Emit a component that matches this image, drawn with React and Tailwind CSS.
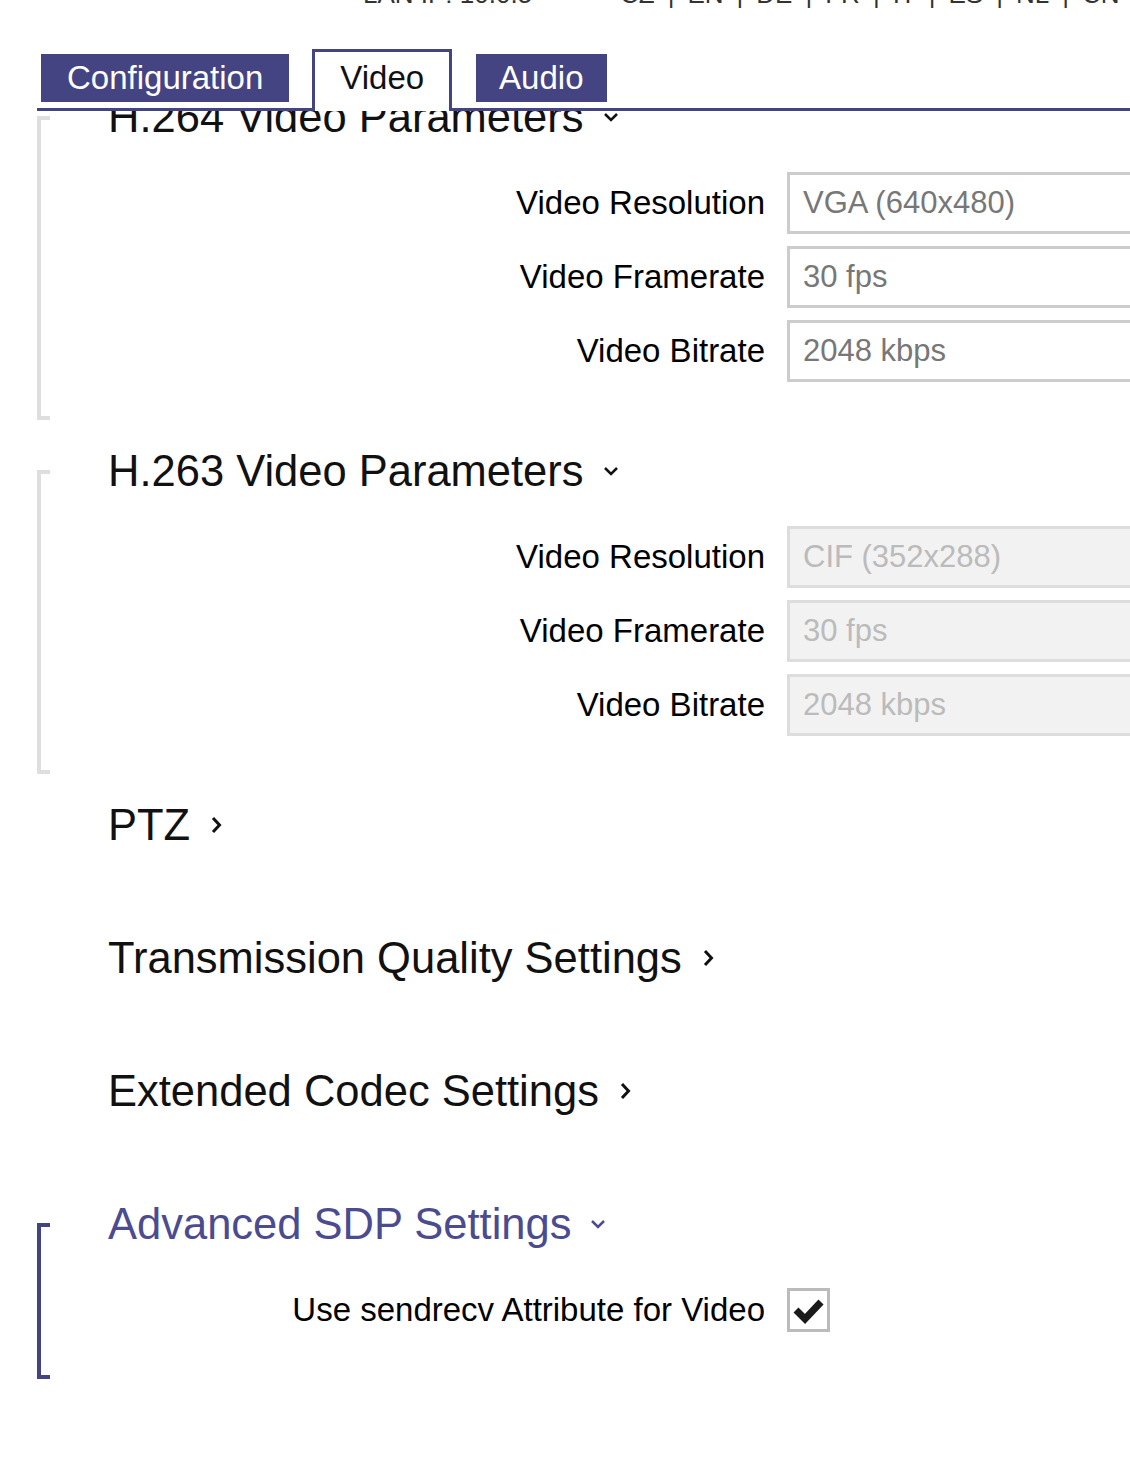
import React from 'react';

function ChevronRight({ color = '#111' }) {
  return (
    <svg width="11" height="18" viewBox="0 0 11 18" className="ml-[21px] shrink-0">
      <path d="M2 2 L8.5 9 L2 16" fill="none" stroke={color} strokeWidth="3" />
    </svg>
  );
}

function ChevronDown({ color = '#111' }) {
  return (
    <svg width="16" height="10" viewBox="0 0 16 10" className="ml-[19px] shrink-0">
      <path d="M2 2 L8 8 L14 2" fill="none" stroke={color} strokeWidth="2.5" />
    </svg>
  );
}

function Field({ label, value, disabled }) {
  return (
    <div className="flex items-center h-[62px]">
      <div className="w-[657px] shrink-0 text-right text-[33px] text-black whitespace-nowrap">{label}</div>
      <div
        className={`ml-[22px] w-[420px] shrink-0 h-[62px] border-[3px] px-[13px] flex items-center text-[31px] whitespace-nowrap ${
          disabled ? 'bg-[#f2f2f2] border-[#dddddd] text-[#bbbbbb]' : 'bg-white border-[#cccccc] text-[#777777]'
        }`}
      >
        {value}
      </div>
    </div>
  );
}

function Section({ title, open, accent, children }) {
  const color = accent ? '#4b4b8f' : '#111111';
  return (
    <section className="flex ml-[37px]">
      {open ? (
        <div
          className={`mt-[25px] w-[13px] shrink-0 border-l-4 border-t-4 border-b-4 ${
            accent ? 'border-[#444483]' : 'border-[#dedede]'
          }`}
        />
      ) : (
        <div className="w-[13px] shrink-0" />
      )}
      <div className={`pl-[58px] flex-1 ${open ? 'pb-[38px]' : 'h-[108px]'}`}>
        <h2
          className={`flex items-center text-[43.5px] leading-[52px] whitespace-nowrap ${
            accent ? 'text-[#4b4b8f]' : 'text-[#111111]'
          }`}
        >
          {title}
          {open ? <ChevronDown color={color} /> : <ChevronRight color={color} />}
        </h2>
        {open && <div className="mt-[29px] flex flex-col gap-[12px]">{children}</div>}
      </div>
    </section>
  );
}

export default function App() {
  const langs = ['CZ', 'EN', 'DE', 'FR', 'IT', 'ES', 'NL', 'CN'];

  return (
    <div className="w-[1130px] min-h-[1478px] bg-white overflow-hidden font-['Liberation_Sans',Arial,sans-serif]">
      {/* header line, scrolled mostly out of view */}
      <div className="h-[49px] overflow-hidden">
        <div className="-mt-[19px] flex text-[26px] leading-[26px] text-[#333333] whitespace-nowrap">
          <span className="ml-[363px] w-[257px] shrink-0">LAN IP: 10.0.5</span>
          <span>
            {langs.map((l, i) => (
              <span key={l}>
                {i > 0 && <span className="mx-[13px]">|</span>}
                {l}
              </span>
            ))}
          </span>
        </div>
      </div>

      {/* tabs */}
      <div className="ml-[37px] h-[62px] flex items-end border-b-[3px] border-[#444483]">
        <div className="ml-[4px] mb-[6px] h-[48px] px-[26px] flex items-center bg-[#444483] text-white text-[33px]">
          Configuration
        </div>
        <div className="ml-[23px] -mb-[3px] h-[62px] border-[3px] border-b-0 border-[#444483] bg-white px-[25px] pt-[2px] text-[33px] text-[#111111]">
          <div className="leading-[48px]">Video</div>
        </div>
        <div className="ml-[24px] mb-[6px] h-[48px] px-[23px] flex items-center bg-[#444483] text-white text-[33px]">
          Audio
        </div>
      </div>

      {/* scrolled content */}
      <div className="overflow-hidden">
        <div className="-mt-[20px] flex flex-col gap-[25px]">
          <Section title="H.264 Video Parameters" open>
            <Field label="Video Resolution" value="VGA (640x480)" />
            <Field label="Video Framerate" value="30 fps" />
            <Field label="Video Bitrate" value="2048 kbps" />
          </Section>

          <Section title="H.263 Video Parameters" open>
            <Field label="Video Resolution" value="CIF (352x288)" disabled />
            <Field label="Video Framerate" value="30 fps" disabled />
            <Field label="Video Bitrate" value="2048 kbps" disabled />
          </Section>

          <Section title="PTZ" />
          <Section title="Transmission Quality Settings" />
          <Section title="Extended Codec Settings" />

          <Section title="Advanced SDP Settings" open accent>
            <div className="flex items-center h-[62px]">
              <div className="w-[657px] shrink-0 text-right text-[33px] text-black whitespace-nowrap">
                Use sendrecv Attribute for Video
              </div>
              <div className="ml-[22px] w-[43px] h-[44px] shrink-0 border-[3px] border-[#bbbbbb] bg-white">
                <svg width="37" height="38" viewBox="0 0 37 38">
                  <path d="M6 19 L15 28 L31 11" fill="none" stroke="#1a1a1a" strokeWidth="7" />
                </svg>
              </div>
            </div>
          </Section>
        </div>
      </div>
    </div>
  );
}
